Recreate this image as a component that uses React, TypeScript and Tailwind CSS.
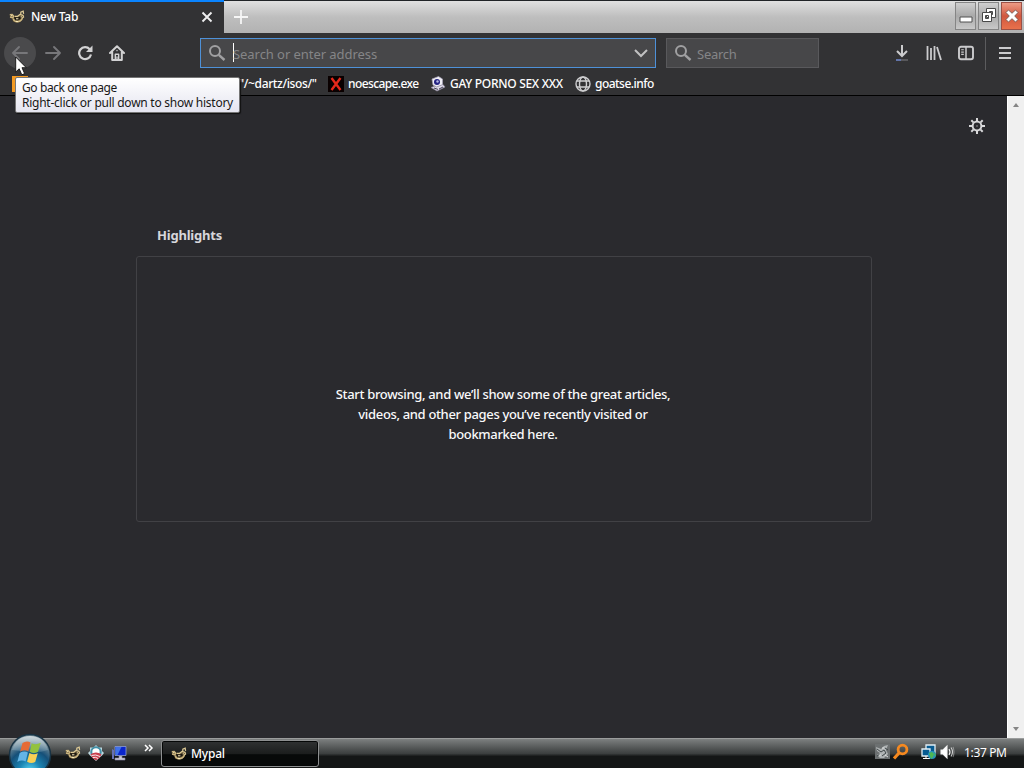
import React from "react";

function PalIcon({ className = "" }: { className?: string }) {
  return (
    <svg viewBox="0 0 16 16" className={`h-4 w-4 shrink-0 ${className}`} fill="none">
      <path d="M.8 6L3 5l2 1.8 3.5.2 3-1.5 3 .5-.6 4-2.4 2.8-3.5 1-4-1L3.4 10 1 8.4z" fill="#5b4d30" />
      <path d="M4.8 8l3.5.6 3-.8.5 1.6L9 11.2l-3-.4z" fill="#1e1a13" />
      <path d="M.8 5.8l2.4-.3 1.6 1.8-1 1.3L1 8M4.2 9.6q.8 3.2 4.2 3.2 3.4-.2 5-3.6" stroke="#cdb781" strokeWidth="1.5" />
      <path d="M6 7.3h2.6l2.4-1.8 3 .8.6 1.8-1.6 1.2M11.8 5V3.2l2.4-1 .4 2.6" stroke="#dcc995" strokeWidth="1.2" />
      <path d="M7 9.8h2.4M2.2 6.6h1M11.8 7.8h1M6.8 12.4h2.4" stroke="#fff1c4" strokeWidth="1" />
    </svg>
  );
}

function SearchIcon() {
  return (
    <svg viewBox="0 0 18 18" className="h-[18px] w-[18px] shrink-0" fill="none" stroke="#a0a0a2">
      <circle cx="7" cy="7" r="5" strokeWidth="2" />
      <path d="M10.8 10.8L16.5 16" strokeWidth="2.4" />
    </svg>
  );
}

function BackIcon({ flip = false }: { flip?: boolean }) {
  return (
    <svg viewBox="0 0 18 16" className={`h-4 w-[18px] ${flip ? "-scale-x-100" : ""}`} fill="none" stroke="#77777a" strokeWidth="1.9" strokeLinecap="round" strokeLinejoin="round">
      <path d="M16 8H2M8 2L2 8l6 6" />
    </svg>
  );
}

function TitleBar() {
  return (
    <header className="flex h-[33px] shrink-0 border-t border-[#202326] bg-linear-to-b from-[#e0e0e0] via-[#bebebe] to-[#b2b2b2]">
      <div className="-mt-px flex h-[33px] w-[224px] shrink-0 items-center border-t-2 border-[#0a84ff] bg-[#323234] pb-[2px] pl-[9px] text-white">
        <PalIcon />
        <span className="ml-[6px] w-[170px] text-[12px] font-medium tracking-[-0.25px]">New Tab</span>
        <svg viewBox="0 0 12 12" className="h-3 w-3" stroke="#eeeeef" strokeWidth="1.9"><path d="M1.5 1.5l9 9m0-9l-9 9" /></svg>
      </div>
      <div className="flex w-[33px] items-center justify-center pb-px">
        <svg viewBox="0 0 16 16" className="h-4 w-4" stroke="#f6f6f6" strokeWidth="1.8"><path d="M8 1v14M1 8h14" /></svg>
      </div>
      <div className="ml-auto flex gap-[2px] pt-[1px] pr-[2px]">
        <div className="flex h-[28px] w-[21px] items-center justify-center border border-[#858585] bg-linear-to-b from-[#cfcfcf] via-[#a9a9a9] to-[#c9c9c9]">
          <svg viewBox="0 0 16 20" className="h-5 w-4 shrink-0"><path d="M2 11h12v5H2z" fill="#fff" stroke="#505050" /></svg>
        </div>
        <div className="flex h-[28px] w-[21px] items-center justify-center border border-[#858585] bg-linear-to-b from-[#cfcfcf] via-[#a9a9a9] to-[#c9c9c9]">
          <svg viewBox="0 0 18 18" className="h-[18px] w-[18px] shrink-0" fill="#fff" fillRule="evenodd" stroke="#484848" strokeWidth="1"><path d="M6.5 1.5h9v9h-9zm3 3v3h3v-3z" /><path d="M2.5 5.5h9v9h-9zm3 3v3h3v-3z" /></svg>
        </div>
        <div className="flex h-[28px] w-[21px] items-center justify-center border border-[#9c5146] bg-linear-to-b from-[#ed9b85] via-[#d0573f] to-[#e9714c]">
          <svg viewBox="0 0 16 16" className="h-4 w-4 shrink-0"><path d="M4.5 2L8 5.3 11.5 2 14 4.5 10.7 8l3.3 3.5-2.5 2.5L8 10.7 4.5 14 2 11.5 5.3 8 2 4.5z" fill="#fff" stroke="#68544f" strokeWidth=".8" /></svg>
        </div>
      </div>
    </header>
  );
}

function Toolbar() {
  return (
    <div className="flex h-[39px] shrink-0 items-center bg-[#323234] pt-px">
      <div className="flex w-[200px] items-center">
        <div className="ml-1 flex h-8 w-8 items-center justify-center rounded-full bg-[#4a4a4c]"><BackIcon /></div>
        <div className="ml-2 flex w-[18px] justify-center"><BackIcon flip /></div>
        <svg viewBox="0 0 16 16" className="ml-[15px] h-4 w-4" fill="none" stroke="#d2d2d3" strokeWidth="2.2">
          <path d="M12.7 4.2A6 6 0 1 0 14 9.6" /><path d="M15.5 .5v6.5H9z" fill="#d2d2d3" stroke="none" />
        </svg>
        <svg viewBox="0 0 16 16" className="ml-4 h-4 w-4" fill="none" stroke="#d2d2d3" strokeWidth="2" strokeLinecap="round" strokeLinejoin="round">
          <path d="M1 8l7-6.8L15 8M3.2 7v8h9.6V7" /><path d="M6.3 15V9.2h3.4V15" strokeWidth="1.4" /><path d="M8 12v3M8 5.5v.2" strokeWidth="1.3" />
        </svg>
      </div>
      <div className="-mt-px flex h-[30px] w-[456px] items-center border border-[#4e91d8] bg-[#474749] pl-[7px] text-[#858587]">
        <SearchIcon />
        <span className="ml-[7px] h-[19px] w-px bg-white" />
        <span className="-ml-px pt-[2px] text-[13px] tracking-[-0.06px] whitespace-nowrap">Search or enter address</span>
        <svg viewBox="0 0 14 10" className="mr-[7px] ml-auto h-[10px] w-[14px]" fill="none" stroke="#c1c1c2" strokeWidth="2"><path d="M1 2l6 6 6-6" /></svg>
      </div>
      <div className="-mt-px ml-[10px] flex h-[30px] w-[153px] items-center border border-[#59595c] bg-[#474749] pl-[7px] text-[#858587]">
        <SearchIcon /><span className="ml-[5px] pt-[2px] text-[13px] tracking-[-0.25px]">Search</span>
      </div>
      <div className="ml-auto flex h-[34px] items-center pr-3">
        <svg viewBox="0 0 16 18" className="mr-[16px] h-[18px] w-4" fill="none" stroke="#cbcbcd" strokeWidth="2"><path d="M8 1v11M3 7l5 5 5-5" /><path d="M2 16h12" stroke="#626266" strokeWidth="1.6" /><path d="M2 16h5" stroke="#657cbe" strokeWidth="1.6" /></svg>
        <svg viewBox="0 0 16 16" className="mr-4 h-4 w-4" stroke="#cbcbcd" strokeWidth="1.8"><path d="M1.5 1v14M5 3v12M8.5 1v14M11 2l4 13" /></svg>
        <svg viewBox="0 0 16 16" className="mr-[11px] h-4 w-4" fill="none" stroke="#cbcbcd" strokeWidth="1.9"><rect x="1" y="1.8" width="14" height="12.4" rx="2" /><path d="M8 2v12" strokeWidth="1.5" /><path d="M3.2 4.8h2.6M3.2 7.1h2.6M3.2 9.4h2.6" strokeWidth="1.1" /></svg>
        <span className="mr-[12px] h-[33px] w-px bg-[#5c5c5e]" />
        <svg viewBox="0 0 14 14" className="h-[14px] w-[14px]" stroke="#cbcbcd" strokeWidth="2"><path d="M1 2h12M1 7h12M1 12h12" /></svg>
      </div>
    </div>
  );
}

function Bookmarks() {
  return (
    <nav className="flex h-6 shrink-0 items-center border-b border-black bg-[#323234] pl-3 text-[12px] whitespace-nowrap text-white">
      <span className="h-4 w-4 border-4 border-[#f39a22] bg-[#5a3714]" />
      <span className="ml-[211px] w-[83px] font-medium tracking-[-0.36px]">"/~dartz/isos/"</span>
      <svg viewBox="0 0 16 16" className="ml-[6px] h-4 w-4"><path d="M0 0h16v16H0z" fill="#090000" /><path d="M3.5 2l9 12M12.5 2l-9 12" stroke="#e5281a" strokeWidth="2.4" /></svg>
      <span className="ml-1 w-[78px] font-medium tracking-[-0.6px]">noescape.exe</span>
      <svg viewBox="0 0 16 16" className="ml-1 h-4 w-4">
        <path d="M2 3l6.5-2.5 4 2.5v6L7 11.5 3 9z" fill="#f0eef5" stroke="#a9a5ba" strokeWidth=".7" /><ellipse cx="7" cy="6" rx="3" ry="3" fill="#242383" /><circle cx="7.5" cy="5.5" r="1.2" fill="#b6b9e8" /><path d="M1 11.5l4-1.5 1.5 1L13 8.5l2 2.5-8 4z" fill="#dedae9" stroke="#8e889e" strokeWidth=".7" /><path d="M4 12l4 1.4M9 13l4-2" stroke="#454356" />
      </svg>
      <span className="ml-1 w-[120px] font-medium tracking-[-0.3px]">GAY PORNO SEX XXX</span>
      <svg viewBox="0 0 16 16" className="ml-[5px] h-4 w-4" fill="none" stroke="#ceced0" strokeWidth="1.4"><circle cx="8" cy="8" r="7" /><ellipse cx="8" cy="8" rx="3.5" ry="7" /><path d="M2 5h12M2 11h12" /></svg>
      <span className="ml-1 font-medium tracking-[-0.53px]">goatse.info</span>
    </nav>
  );
}

function StartOrb() {
  return (
    <svg viewBox="0 0 44 36" className="-mt-[7px] ml-[8px] h-9 w-11 shrink-0">
      <defs>
        <radialGradient id="orb" cx=".5" cy=".9" r=".75"><stop stopColor="#5ed9f4" /><stop offset=".35" stopColor="#1b86b5" /><stop offset=".7" stopColor="#155079" /><stop offset="1" stopColor="#6f8794" /></radialGradient>
        <linearGradient id="shine" x2="0" y2="1"><stop stopColor="#e4eaec" stopOpacity=".85" /><stop offset="1" stopColor="#a5c4d2" stopOpacity=".2" /></linearGradient>
      </defs>
      <circle cx="22" cy="23" r="20.5" fill="url(#orb)" stroke="#183344" strokeWidth="1.5" />
      <path d="M4 18Q8 4 22 4t18 14q-9 3-18 2T4 18z" fill="url(#shine)" />
      <path d="M14.5 11q4-2.8 8-.6l-2.2 8.8q-4-2-8.2.5z" fill="#e66b35" />
      <path d="M23.7 11.2q4 2.2 9-.4l-2.6 9q-4.3 2.5-8.3 0z" fill="#93c23e" />
      <path d="M11.7 21q4-2.6 8.2-.5l-2.3 8.9q-4-2.1-8.3.5z" fill="#64b4e6" />
      <path d="M21.4 21q4.2 2.2 8.4.3l-2.6 8.6q-4 2.2-8.1-.2z" fill="#f7cf55" />
    </svg>
  );
}

function Taskbar() {
  return (
    <footer className="relative z-10 flex h-[30px] shrink-0 items-start border-t border-[#9a9c9c] bg-linear-to-b from-[#7d8080] from-0% via-[#3c3f3f] via-50% to-[#141616] to-60% text-white">
      <StartOrb />
      <div className="mt-[6px] ml-[13px] flex items-center gap-2">
        <PalIcon />
        <svg viewBox="0 0 16 16" className="-ml-px h-4 w-4">
          <path d="M8 0l2.5 2.5H14V6l2 2-2 2.5L8 16l-6-5.5L0 8l2-2V2.5h3.5z" fill="#bdd9e0" />
          <circle cx="8" cy="7" r="4.7" fill="#fff" stroke="#4391a8" strokeWidth="2" />
          <path d="M2.5 9.2Q8 6 13.5 9.2L11.5 13 8 15.5 4.5 13z" fill="#c93f4d" />
          <path d="M3.5 10.5q4-1.5 8.5 1M4.8 12.5q3-.8 5.2 1" stroke="#fff" fill="none" strokeWidth=".9" />
        </svg>
        <svg viewBox="0 0 16 16" className="-ml-px h-4 w-4">
          <path d="M4 1.5h11v9H4z" fill="#0a25cc" stroke="#8f9fd0" strokeWidth=".8" /><path d="M4.5 2h6l-4 8h-2z" fill="#3f72e8" /><path d="M1 4v10h2V5z" fill="#6570b5" /><path d="M8 11h3v2h3v2H4v-2h4z" fill="#cbc9d2" stroke="#8581aa" strokeWidth=".6" />
        </svg>
      </div>
      <svg viewBox="0 0 10 8" className="mt-[5px] ml-[17px] h-2 w-[10px]" fill="none" stroke="#fff" strokeWidth="1.5"><path d="M1 1l3 3-3 3M5 1l3 3-3 3" /></svg>
      <div className="mt-[1px] ml-[7px] flex h-[27px] w-[158px] items-center rounded-[3px] border border-[#8d8f90] bg-linear-to-b from-[#303233] from-0% via-[#1c1e1e] via-50% to-[#070909] to-55% pl-[9px] shadow-[inset_0_0_0_1px_#050707]">
        <PalIcon /><span className="ml-1 text-[12px] font-medium tracking-[-0.2px]">Mypal</span>
      </div>
      <div className="ml-auto flex h-[25px] items-center pr-[17px]">
        <svg viewBox="0 0 16 16" className="mr-px h-4 w-4"><path d="M0 0h15v15H0z" fill="#6c7071" /><path d="M1 3l5 2 3-3 4-1-2 5 2 4-4 4H5l-3-3 3-2-3-2z" fill="#b0b4b5" /><path d="M2 5l4 3 3-2 2 3-4 3M2 12l3-2m5-6l3 2" stroke="#3f4648" fill="none" /><path d="M7 4h2M4 11h2M10 11l3 2" stroke="#e0e2e2" /></svg>
        <svg viewBox="0 0 18 18" className="h-[18px] w-[18px]" fill="none" stroke="#f58920"><circle cx="10.5" cy="6.5" r="4.4" strokeWidth="2.8" /><path d="M7.5 9.5L2 15.5" strokeWidth="3.2" /></svg>
        <svg viewBox="0 0 16 16" className="ml-[11px] h-4 w-4"><path d="M5 1h9v8H5z" fill="#075b91" stroke="#e2eef4" strokeWidth="1.3" /><path d="M1 5h8v7H1z" fill="#075b91" stroke="#e2eef4" strokeWidth="1.3" /><path d="M2 14.5h7M5 12v2" stroke="#fff" /><circle cx="11" cy="11" r="4" fill="#2693bc" /><path d="M8 9l3-1 2 2-1 3-2 2-1-3zM13 8l2 3-1 2z" fill="#4eb852" /></svg>
        <svg viewBox="0 0 16 16" className="ml-[3px] h-4 w-4" fill="none" stroke="#f4f5f5" strokeWidth="1.1"><path d="M1 6v4h2l4 4V2L3 6z" fill="#fff" /><path d="M9 5q2 3 0 6" /><path d="M11 3.5q3 4.5 0 9" strokeOpacity=".8" /><path d="M13 3q2 5 0 10" strokeOpacity=".4" /></svg>
        <span className="ml-[8px] w-[43px] pt-[2px] text-[12px] tracking-[-0.35px] whitespace-nowrap">1:37 PM</span>
      </div>
    </footer>
  );
}

export default function App() {
  return (
    <div className="relative flex h-[768px] w-[1024px] flex-col overflow-hidden bg-[#2a2a2e] font-['Noto_Sans','Open_Sans',sans-serif] leading-[16px]">
      <TitleBar />
      <Toolbar />
      <Bookmarks />
      <div className="flex h-[642px] shrink-0">
        <main className="flex flex-1 flex-col">
          <div className="flex h-[129px] justify-end pt-[22px] pr-[22px]">
            <svg viewBox="0 0 16 16" className="h-4 w-4" fill="none" stroke="#d8d8da" strokeWidth="2"><circle cx="8" cy="8" r="4.4" /><circle cx="8" cy="8" r=".7" fill="#b1b1b3" stroke="none" /><path d="M8 0v3M8 13v3M0 8h3M13 8h3M2.3 2.3l2.1 2.1M11.6 11.6l2.1 2.1M2.3 13.7l2.1-2.1M11.6 4.4l2.1-2.1" /></svg>
          </div>
          <section className="ml-[136px] w-[736px]">
            <h1 className="mb-[11px] h-5 pl-[21px] text-[13px] leading-5 font-bold tracking-[-0.2px] text-[#d7d7db]">Highlights</h1>
            <div className="flex h-[266px] items-center justify-center rounded-[3px] border border-[#414145] pt-[50px] pr-[2px] text-center text-[13px] leading-5 font-medium tracking-[-0.34px] text-[#f9f9fa]">
              <p>Start browsing, and we’ll show some of the great articles,<br />videos, and other pages you’ve recently visited or<br />bookmarked here.</p>
            </div>
          </section>
        </main>
        <aside className="flex w-[17px] flex-col items-center justify-between border-l border-white bg-[#f0f0f0] pt-[6px] pb-[6px]">
          <svg viewBox="0 0 8 5" className="h-[5px] w-2"><path d="M1 5l3-4 3 4z" fill="#858585" /></svg>
          <svg viewBox="0 0 8 5" className="h-[5px] w-2"><path d="M1 0l3 4 3-4z" fill="#858585" /></svg>
        </aside>
      </div>
      <Taskbar />
      <div className="absolute top-[77px] left-[15px] z-20 h-[36px] w-[225px] rounded-[2px] border border-[#757575] bg-linear-to-b from-white to-[#e5e5f0] pt-[2px] pl-[6px] text-[12px] leading-[15px] tracking-[-0.25px] whitespace-nowrap text-[#171717] shadow-[1px_1px_1px_#111]">
        <div className="tracking-[-0.4px]">Go back one page</div>
        <div>Right-click or pull down to show history</div>
      </div>
      <svg viewBox="0 0 12 20" className="absolute top-[56px] left-[15px] z-30 h-5 w-3"><path d="M.7 1v15l3.5-3.2 2.6 6 2.8-1.2L7 11.7h4.3z" fill="#fff" stroke="#111" strokeWidth=".9" /></svg>
    </div>
  );
}
